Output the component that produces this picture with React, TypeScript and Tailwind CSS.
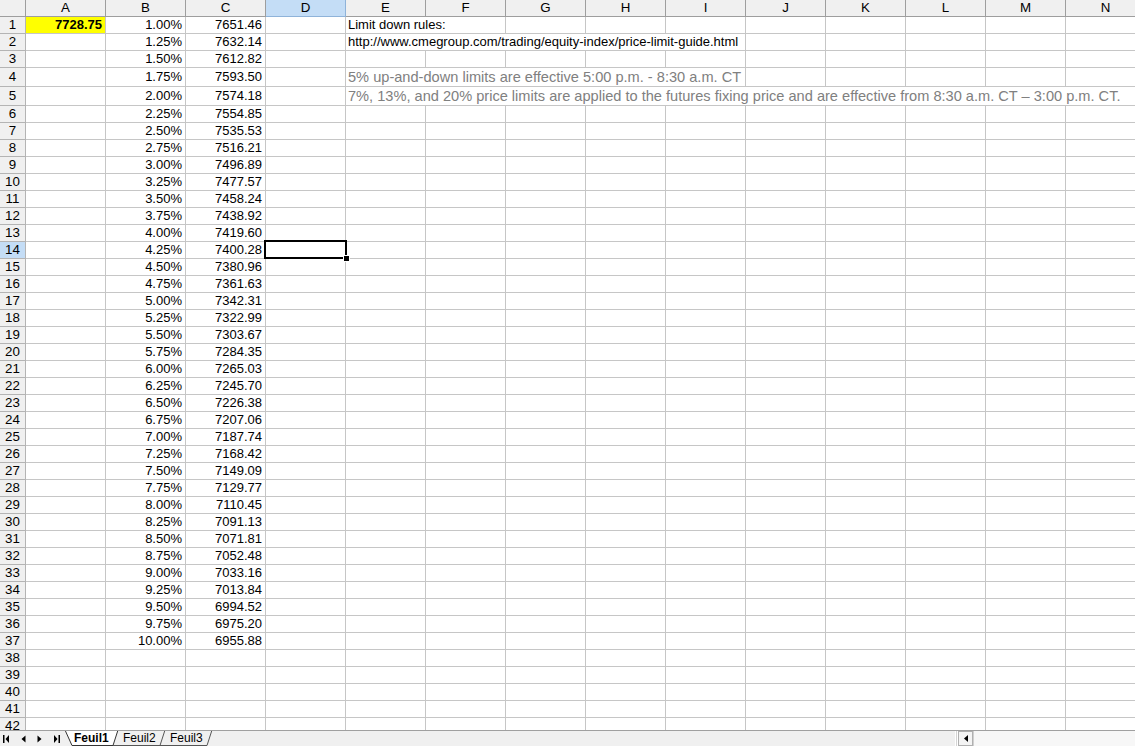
import React from "react";

const COLS = ["A", "B", "C", "D", "E", "F", "G", "H", "I", "J", "K", "L", "M", "N"];

const PRICES = [
  "7651.46", "7632.14", "7612.82", "7593.50", "7574.18", "7554.85", "7535.53", "7516.21",
  "7496.89", "7477.57", "7458.24", "7438.92", "7419.60", "7400.28", "7380.96", "7361.63",
  "7342.31", "7322.99", "7303.67", "7284.35", "7265.03", "7245.70", "7226.38", "7207.06",
  "7187.74", "7168.42", "7149.09", "7129.77", "7110.45", "7091.13", "7071.81", "7052.48",
  "7033.16", "7013.84", "6994.52", "6975.20", "6955.88",
];

type Cell = {
  text?: string;
  span?: number;
  right?: boolean;
  cls?: string;
};

const ROW_COUNT = 42;
const SEL_ROW = 14;
const SEL_COL = 3; // D

function rowCells(r: number): Cell[] {
  const cells: Cell[] = [];
  // A
  cells.push(r === 1 ? { text: "7728.75", right: true, cls: "font-bold bg-[#ffff00]" } : {});
  // B, C
  if (r <= 37) {
    cells.push({ text: (r * 0.25 + 0.75).toFixed(2) + "%", right: true });
    cells.push({ text: PRICES[r - 1], right: true });
  } else {
    cells.push({}, {});
  }
  // D
  cells.push({});
  // E onwards (long text runs over the empty cells to its right)
  let used = 0;
  if (r === 1) {
    cells.push({ text: "Limit down rules:", span: 2 });
    used = 2;
  } else if (r === 2) {
    cells.push({ text: "http://www.cmegroup.com/trading/equity-index/price-limit-guide.html", span: 5 });
    used = 5;
  } else if (r === 4) {
    cells.push({
      text: "5% up-and-down limits are effective 5:00 p.m. - 8:30 a.m. CT",
      span: 5,
      cls: "text-[#808080] text-[14.6px]",
    });
    used = 5;
  } else if (r === 5) {
    cells.push({
      text: "7%, 13%, and 20% price limits are applied to the futures fixing price and are effective from 8:30 a.m. CT \u2013 3:00 p.m. CT.",
      span: 10,
      cls: "text-[#808080] text-[14.6px]",
    });
    used = 10;
  }
  for (let i = used; i < 10; i++) cells.push({});
  return cells;
}

function HeaderRow() {
  return (
    <div className="flex h-[17px] shrink-0">
      <div className="w-[26px] shrink-0 border-r border-b border-[#9e9e9e] bg-[#f0f0f0]" />
      {COLS.map((c, i) => (
        <div
          key={c}
          className={
            "w-[80px] shrink-0 border-r border-b text-center leading-[16px] text-[13.33px] " +
            (i === SEL_COL ? "bg-[#c4ddf6] border-[#8fb3d9]" : "bg-[#f0f0f0] border-[#9e9e9e]")
          }
        >
          {c}
        </div>
      ))}
    </div>
  );
}

function SheetRow({ r }: { r: number }) {
  const tall = r === 4 || r === 5;
  const h = tall ? "h-[19px]" : "h-[17px]";
  const lead = tall ? "leading-[18px]" : "leading-[16px]";
  return (
    <div className={"flex shrink-0 " + h}>
      <div
        className={
          "w-[26px] shrink-0 border-r border-b border-[#b4b4b4] text-center text-[13.33px] " +
          lead +
          (r === SEL_ROW ? " bg-[#c4ddf6]" : " bg-[#f0f0f0]")
        }
      >
        {r}
      </div>
      {rowCells(r).map((cell, i) => (
        <div
          key={i}
          style={{ width: 80 * (cell.span ?? 1) }}
          className={
            "shrink-0 border-r border-b border-[#c6c6c6] whitespace-nowrap overflow-hidden flex items-end " +
            lead +
            (cell.right ? " justify-end pr-[3px]" : " pl-[2px]") +
            (cell.cls ? " " + cell.cls : "")
          }
        >
          {cell.text}
        </div>
      ))}
    </div>
  );
}

function NavArrow({ dir, bar }: { dir: "l" | "r"; bar?: boolean }) {
  return (
    <svg width="7" height="8" viewBox="0 0 7 8" className="shrink-0">
      {dir === "l" ? (
        <>
          {bar && <rect x="0" y="0" width="1.5" height="8" fill="#000" />}
          <path d={bar ? "M6 0 L2.5 4 L6 8 Z" : "M5.5 0.5 L1.5 4 L5.5 7.5 Z"} fill="#000" />
        </>
      ) : (
        <>
          <path d={bar ? "M1 0 L4.5 4 L1 8 Z" : "M1.5 0.5 L5.5 4 L1.5 7.5 Z"} fill="#000" />
          {bar && <rect x="5.5" y="0" width="1.5" height="8" fill="#000" />}
        </>
      )}
    </svg>
  );
}

function TabBar() {
  return (
    <div className="flex h-[16px] shrink-0 bg-[#f0f0f0] border-t border-[#a0a0a0] text-[12px] leading-[14px]">
      {/* sheet navigation */}
      <div className="w-[64px] shrink-0 flex items-center pl-[3px]">
        <NavArrow dir="l" bar />
        <div className="ml-[10px]">
          <NavArrow dir="l" />
        </div>
        <div className="ml-[9px]">
          <NavArrow dir="r" />
        </div>
        <div className="ml-[10px]">
          <NavArrow dir="r" bar />
        </div>
      </div>

      {/* sheet tabs */}
      <div className="relative w-[891px] shrink-0 flex">
        <svg className="absolute inset-0" width="891" height="15" viewBox="0 0 891 15">
          <path d="M1 -1 L8 14.5 L49 14.5 L54 -1" fill="#ffffff" />
          <path d="M1 -1 L8 14.5 L49 14.5 L54 -1" fill="none" stroke="#333" strokeWidth="1" />
          <path d="M49 14.5 L96 14.5 L101 -1" fill="none" stroke="#555" strokeWidth="1" />
          <path d="M96 14.5 L143 14.5 L148 -1" fill="none" stroke="#555" strokeWidth="1" />
        </svg>
        <span className="relative w-[59px] pl-[10px] font-bold">Feuil1</span>
        <span className="relative w-[47px]">Feuil2</span>
        <span className="relative w-[47px]">Feuil3</span>
      </div>

      {/* horizontal scroll */}
      <div className="w-[3px] shrink-0 border-l border-[#555] border-r border-[#ffffff] bg-[#d4d4d4]" />
      <div className="w-[15px] shrink-0 flex items-center justify-center border border-[#b0b0b0] bg-[#f4f4f4]">
        <svg width="4" height="7" viewBox="0 0 4 7">
          <path d="M4 0 L0 3.5 L4 7 Z" fill="#000" />
        </svg>
      </div>
      <div className="flex-1 border-l border-[#d0d0d0] bg-[#f7f7f7]" />
    </div>
  );
}

export default function App() {
  const rows = Array.from({ length: ROW_COUNT }, (_, i) => i + 1);
  return (
    <div className="w-[1135px] h-[746px] overflow-hidden flex flex-col bg-white text-black font-['Liberation_Sans',Arial,sans-serif] text-[13px]">
      <div className="relative flex-1 overflow-hidden flex flex-col">
        <HeaderRow />
        {rows.map((r) => (
          <SheetRow key={r} r={r} />
        ))}

        {/* active cell D14 */}
        <div className="absolute left-[264px] top-[240px] w-[83px] h-[19px] border-2 border-black">
          <div className="absolute right-[-5px] bottom-[-5px] w-[7px] h-[7px] bg-black border border-white" />
        </div>
      </div>
      <TabBar />
    </div>
  );
}
